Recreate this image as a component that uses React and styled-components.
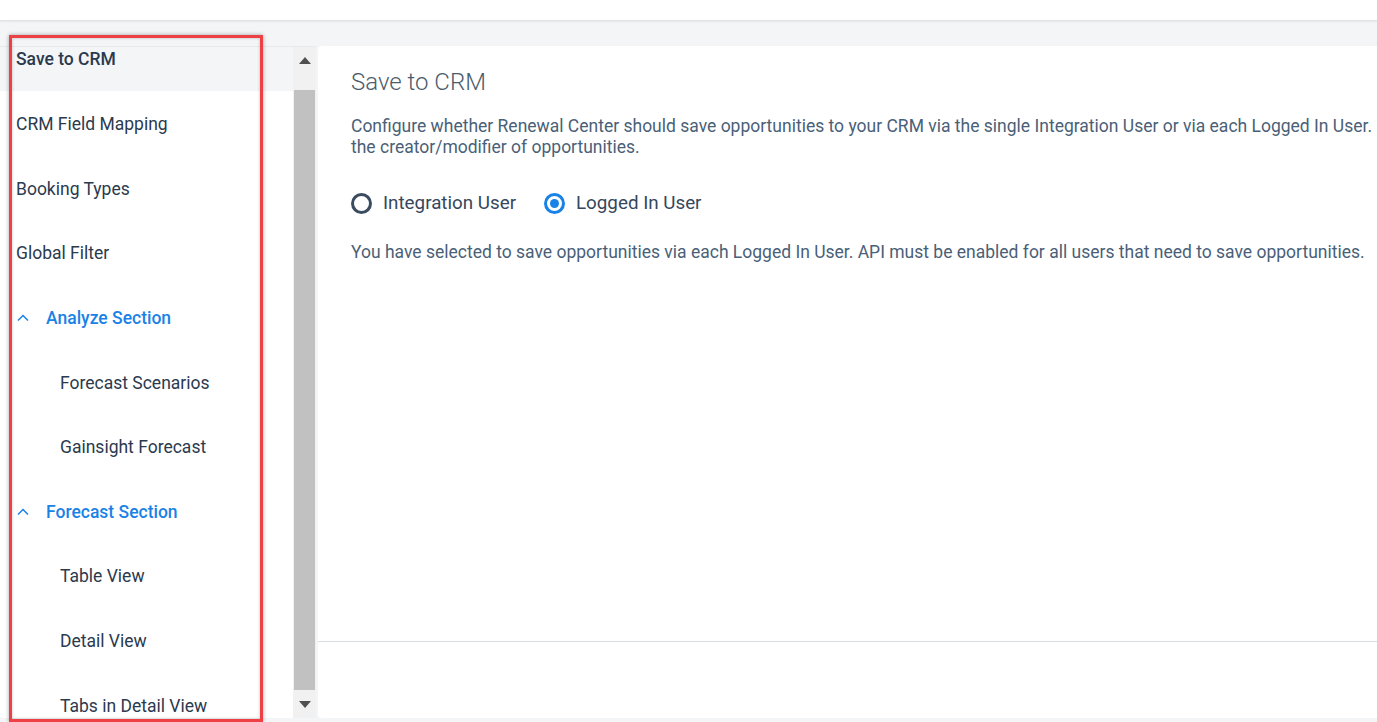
import React from 'react';
import styled, { createGlobalStyle } from 'styled-components';

const GlobalStyle = createGlobalStyle`
  html, body {
    margin: 0;
    padding: 0;
    overflow: hidden;
    background: #f4f5f7;
    font-family: Roboto, "Liberation Sans", sans-serif;
  }
`;

// --- sidebar data ---
const navItems = [
  { label: 'Save to CRM', level: 0, active: true },
  { label: 'CRM Field Mapping', level: 0 },
  { label: 'Booking Types', level: 0 },
  { label: 'Global Filter', level: 0 },
  { label: 'Analyze Section', level: 'section' },
  { label: 'Forecast Scenarios', level: 1 },
  { label: 'Gainsight Forecast', level: 1 },
  { label: 'Forecast Section', level: 'section' },
  { label: 'Table View', level: 1 },
  { label: 'Detail View', level: 1 },
  { label: 'Tabs in Detail View', level: 1 },
];

const Page = styled.div`
  width: 1377px;
  height: 722px;
  display: flex;
  flex-direction: column;
  position: relative;
  background: #f4f5f7;
  overflow: hidden;
`;

const TopBar = styled.div`
  height: 20px;
  background: #fff;
  border-bottom: 1px solid #dfe3e8;
  box-shadow: 0 1px 2px rgba(0, 0, 0, 0.06);
  flex-shrink: 0;
`;

const Body = styled.div`
  flex: 1;
  display: flex;
  padding-top: 25px;
  padding-bottom: 4px;
  min-height: 0;
`;

const Sidebar = styled.div`
  width: 316px;
  display: flex;
  flex-shrink: 0;
  border-top: 1px solid #e6e9ed;
`;

const NavList = styled.div`
  width: 293px;
  background: #fff;
  overflow: hidden;
  display: flex;
  flex-direction: column;
`;

const NavItem = styled.div`
  height: ${p => (p.$first ? '44px' : '64.6px')};
  flex-shrink: 0;
  box-sizing: border-box;
  display: flex;
  align-items: ${p => (p.$first ? 'flex-start' : 'center')};
  padding-top: 2px;
  padding-left: ${p => (p.$level === 1 ? '60px' : p.$level === 'section' ? '17px' : '16px')};
  gap: 17px;
  font-size: 17.5px;
  background: ${p => (p.$active ? '#f4f5f7' : '#fff')};
  color: ${p => (p.$level === 'section' ? '#1a82e6' : '#2b3a4e')};
  font-weight: ${p => (p.$level === 'section' || p.$active ? 500 : 400)};
`;

const ScrollTrack = styled.div`
  width: 23px;
  background: #f1f1f1;
  display: flex;
  flex-direction: column;
  align-items: center;
`;

const ScrollArrow = styled.div`
  height: 43px;
  width: 100%;
  display: flex;
  align-items: ${p => (p.$down ? 'flex-end' : 'flex-start')};
  justify-content: center;
  padding: ${p => (p.$down ? '0 0 10px' : '10px 0 0')};
  box-sizing: border-box;
  flex-shrink: 0;
`;

const ScrollThumb = styled.div`
  flex: 1;
  width: 21px;
  background: #c1c1c1;
  margin-bottom: -15px;
`;

const Main = styled.div`
  margin-left: 2px;
  flex: 1;
  min-width: 0;
  background: #fff;
  border-radius: 4px 0 0 4px;
  display: flex;
  flex-direction: column;
`;

const Content = styled.div`
  height: 596px;
  box-sizing: border-box;
  padding: 22px 33px;
  border-bottom: 1px solid #d6dee6;
`;

const Title = styled.h2`
  margin: 0 0 20px;
  font-size: 24px;
  font-weight: 300;
  color: #4b5b6c;
`;

const Text = styled.p`
  margin: 0;
  font-size: 17.5px;
  line-height: 21px;
  color: #4a5f78;
  white-space: nowrap;
`;

const RadioRow = styled.div`
  display: flex;
  gap: 28px;
  margin: 34px 0 28px;
`;

const RadioLabel = styled.label`
  display: flex;
  align-items: center;
  gap: 11px;
  font-size: 18.8px;
  color: #35475c;
`;

const RadioCircle = styled.span`
  width: 21px;
  height: 21px;
  box-sizing: border-box;
  border-radius: 50%;
  border: 3px solid ${p => (p.$checked ? '#1a82e6' : '#3b4c60')};
  display: flex;
  align-items: center;
  justify-content: center;

  &::after {
    content: '';
    width: 9px;
    height: 9px;
    border-radius: 50%;
    background: ${p => (p.$checked ? '#1a82e6' : 'transparent')};
  }
`;

const Footer = styled.div`
  flex: 1;
`;

const Highlight = styled.div`
  position: absolute;
  left: 9px;
  top: 35px;
  width: 254px;
  height: 687px;
  box-sizing: border-box;
  border: 3px solid #ee4146;
  box-shadow: 0 0 4px rgba(0, 0, 0, 0.35), inset 0 0 3px rgba(0, 0, 0, 0.25);
  pointer-events: none;
`;

const Chevron = () => (
  <svg width="12" height="8" viewBox="0 0 12 8" fill="none">
    <path d="M1 6.5 L6 1.5 L11 6.5" stroke="#1a82e6" strokeWidth="1.5" />
  </svg>
);

const Triangle = ({ down }) => (
  <svg width="12" height="7" viewBox="0 0 12 7">
    <path d={down ? 'M0 0 H12 L6 7 Z' : 'M0 7 H12 L6 0 Z'} fill="#505050" />
  </svg>
);

export default function App() {
  return (
    <>
      <GlobalStyle />
      <Page>
        <TopBar />
        <Body>
          <Sidebar>
            <NavList>
              {navItems.map((item, i) => (
                <NavItem key={item.label} $level={item.level} $active={item.active} $first={i === 0}>
                  {item.level === 'section' && <Chevron />}
                  <span>{item.label}</span>
                </NavItem>
              ))}
            </NavList>
            <ScrollTrack>
              <ScrollArrow><Triangle /></ScrollArrow>
              <ScrollThumb />
              <ScrollArrow $down><Triangle down /></ScrollArrow>
            </ScrollTrack>
          </Sidebar>
          <Main>
            <Content>
              <Title>Save to CRM</Title>
              <Text>
                Configure whether Renewal Center should save opportunities to your CRM via the single Integration User or via each Logged In User.
                <br />
                the creator/modifier of opportunities.
              </Text>
              <RadioRow>
                <RadioLabel><RadioCircle />Integration User</RadioLabel>
                <RadioLabel><RadioCircle $checked />Logged In User</RadioLabel>
              </RadioRow>
              <Text>
                You have selected to save opportunities via each Logged In User. API must be enabled for all users that need to save opportunities.
              </Text>
            </Content>
            <Footer />
          </Main>
        </Body>
        <Highlight />
      </Page>
    </>
  );
}
